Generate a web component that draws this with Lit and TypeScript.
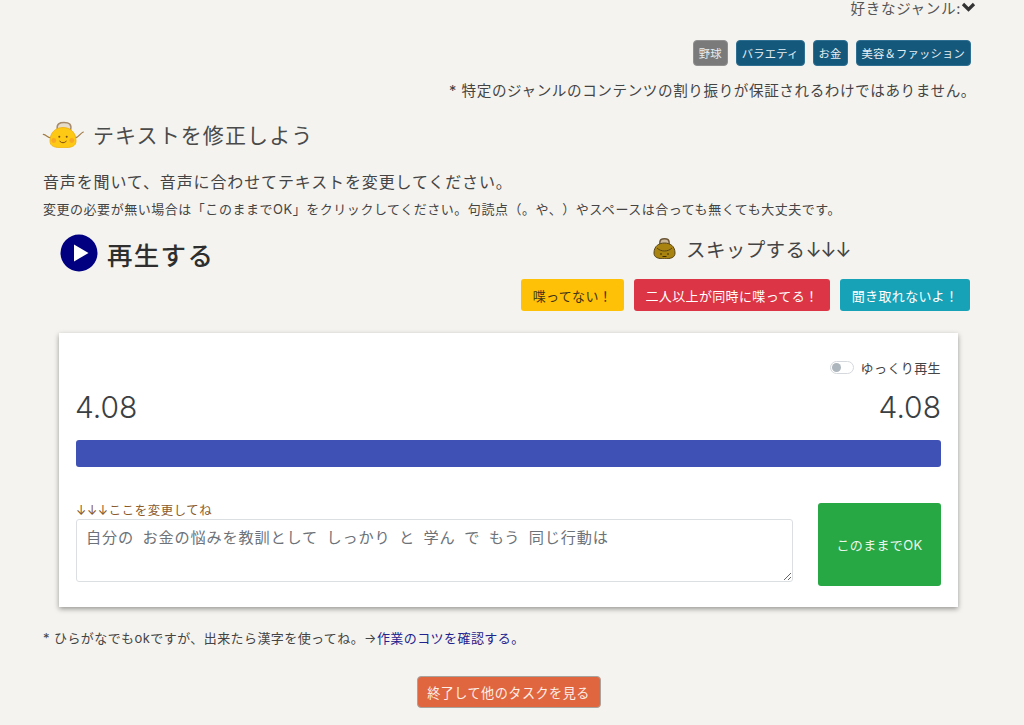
import { LitElement, html, css, svg } from 'lit';
import { customElement } from 'lit/decorators.js';

const happyPurse = svg`
  <path d="M9.5 16.5 C6.5 18 4.5 13.5 1.3 13.3 M32.5 16.5 C36 18 37.5 12.5 41.3 11" fill="none" stroke="#a27c48" stroke-width="1.2" stroke-linecap="round"/>
  <path d="M15.5 9 C14 2.5 18 1.5 22 1.5 C27 1.5 30 3 28.5 9 Z" fill="#e6dccb" stroke="#a58a6c" stroke-width="1.6"/>
  <path d="M8 20 C8 11 14 6.5 21 6.5 C28 6.5 34 11 34 20 C34 25.5 29 26.8 21 26.8 C13 26.8 8 25.5 8 20 Z" fill="#fdc914" stroke="#eeb00c" stroke-width="0.8"/>
  <circle cx="11.8" cy="19.5" r="2.4" fill="#f9a825"/>
  <circle cx="29.8" cy="19.5" r="2.4" fill="#f9a825"/>
  <circle cx="17.3" cy="15.8" r="1" fill="#7a4e12"/>
  <circle cx="24.7" cy="15.8" r="1" fill="#7a4e12"/>
  <path d="M17.5 20 Q21 23.5 24.5 20" fill="none" stroke="#7a4e12" stroke-width="1"/>
`;

const sadPurse = svg`
  <path d="M7 7 C6 1 9 .8 11.5 .8 C14 .8 17 1 16 7 Z" fill="#cbb89a" stroke="#6b5536" stroke-width="1.4"/>
  <path d="M1 15 C1 8 6 5 11.5 5 C17 5 22 8 22 15 C22 19.5 18 20.8 11.5 20.8 C5 20.8 1 19.5 1 15 Z" fill="#a8830f" stroke="#54431a" stroke-width="1"/>
  <path d="M4 10 C8 14 15 14 19 10" fill="none" stroke="#54431a" stroke-width="1"/>
  <circle cx="8" cy="16" r=".8" fill="#2e2408"/>
  <circle cx="15" cy="16" r=".8" fill="#2e2408"/>
  <path d="M9.5 18.5 H13.5" stroke="#2e2408" stroke-width=".9"/>
`;

@customElement('app-root')
export class AppRoot extends LitElement {
  static styles = css`
    :host {
      display: block;
      height: 725px;
      overflow: hidden;
      box-sizing: border-box;
      background: #f4f3ef;
      color: #444;
      font-family: Inter, "Noto Sans CJK JP", sans-serif;
      text-spacing-trim: space-all;
      padding: 0 53px 0 43px;
    }
    .genre-head {
      display: flex;
      justify-content: flex-end;
      align-items: flex-start;
      height: 18px;
      margin-right: -5px;
      font-size: 14.6px;
      letter-spacing: 0.6px;
      line-height: 18px;
      color: #555;
    }
    .genre-head svg { width: 15px; height: 12px; margin-top: 1px; }
    .badges {
      display: flex;
      justify-content: flex-end;
      gap: 8px;
      margin-top: 22px;
    }
    .badge {
      height: 26px;
      box-sizing: border-box;
      padding: 0 5px;
      display: flex;
      align-items: center;
      border-radius: 4px;
      font-size: 11.3px;
      letter-spacing: 0.2px;
      color: #e4eef3;
      background: #14587c;
      border: 1px solid #2f6f92;
    }
    .badge.off { background: #7a7a7a; border-color: #909090; }
    .notice {
      text-align: right;
      font-size: 14.6px;
      letter-spacing: 0.57px;
      line-height: 22px;
      margin: 14px -5px 0 0;
    }
    .title {
      display: flex;
      align-items: center;
      gap: 8px;
      margin: 16px 0 0 -1px;
      height: 32px;
      font-size: 21px;
      letter-spacing: 1.1px;
      font-weight: 400;
      color: #4a4a4a;
    }
    .title svg { width: 43px; height: 27px; }
    .lead {
      font-size: 16px;
      letter-spacing: 0.87px;
      line-height: 24px;
      margin-top: 20px;
    }
    .sub {
      font-size: 13px;
      letter-spacing: 0.53px;
      line-height: 18px;
      margin-top: 6px;
    }
    .actions {
      display: flex;
      justify-content: space-between;
      margin-top: 6px;
      padding-left: 17px;
    }
    .play {
      display: flex;
      align-items: center;
      gap: 9px;
      height: 38px;
      margin-top: 10px;
      font-size: 25.5px;
      letter-spacing: 1.3px;
      font-weight: 500;
      color: #2e2e2e;
    }
    .play svg { width: 38px; height: 38px; }
    .skip-col { display: flex; flex-direction: column; align-items: flex-end; }
    .skip {
      display: flex;
      align-items: center;
      gap: 10px;
      height: 30px;
      margin: 9px 119px 0 0;
      font-size: 19.5px;
      letter-spacing: 0.4px;
      color: #444;
    }
    .skip svg { width: 23px; height: 21px; }
    .skip .arrows { letter-spacing: -1.4px; margin-right: 2px; }
    .reasons { display: flex; gap: 10px; margin: 16px 1px 0 0; }
    .btn {
      border: none;
      height: 32px;
      padding: 0 11.7px;
      border-radius: 3px;
      font: inherit;
      font-size: 13px;
      letter-spacing: 0.35px;
      color: #fff;
    }
    .btn.yellow { background: #ffc107; color: #3f3517; }
    .btn.red { background: #dc3545; }
    .btn.teal { background: #17a2b8; }
    .card {
      background: #fff;
      margin: 22px 13px 0 16px;
      height: 274px;
      box-sizing: border-box;
      padding: 25px 17px 21px;
      box-shadow: 0 2px 5px rgba(0, 0, 0, 0.38);
    }
    .slow {
      display: flex;
      justify-content: flex-end;
      align-items: center;
      gap: 7px;
      height: 18px;
      font-size: 13px;
      letter-spacing: 0.4px;
      color: #444;
    }
    .switch {
      width: 24px;
      height: 13px;
      box-sizing: border-box;
      border: 1px solid #d5d8dc;
      border-radius: 7px;
      background: #fff;
      padding: 1px;
    }
    .switch i { display: block; width: 9px; height: 9px; border-radius: 50%; background: #adb5bd; }
    .times {
      display: flex;
      justify-content: space-between;
      font-size: 30px;
      font-weight: 300;
      line-height: 40px;
      margin: 11px 0 0 -1px;
      color: #3a3f44;
    }
    .bar { height: 27px; margin-top: 13px; border-radius: 3px; background: #3f51b5; }
    .edit { display: flex; gap: 25px; margin-top: 36px; }
    .field { flex: 1; display: flex; flex-direction: column; }
    .field label { font-size: 12.4px; letter-spacing: 0.6px; line-height: 15px; margin-bottom: 1px; color: #8a5a2c; }
    textarea {
      height: 63px;
      box-sizing: border-box;
      border: 1px solid #dcdfe2;
      border-radius: 3px;
      padding: 6px 9px;
      font: inherit;
      font-size: 15.2px;
      letter-spacing: 0.8px;
      word-spacing: 3.5px;
      line-height: 24px;
      color: #6c7278;
    }
    .ok {
      width: 123px;
      height: 83px;
      border: none;
      border-radius: 3px;
      background: #28a745;
      color: #e9f6ec;
      font: inherit;
      font-size: 13px;
      letter-spacing: 0.35px;
    }
    .hint { font-size: 13px; letter-spacing: 0.42px; line-height: 20px; margin-top: 21px; color: #444; }
    .hint a { color: #23238e; text-decoration: none; }
    .finish-row { display: flex; justify-content: center; padding-left: 3px; margin-top: 28px; }
    .finish {
      width: 184px;
      height: 32px;
      border: 1px solid #a9a39d;
      border-radius: 4px;
      background: #e0663f;
      color: #fdeee8;
      font: inherit;
      font-size: 13.1px;
      letter-spacing: 0.5px;
    }
  `;

  render() {
    return html`
      <div class="genre-head">
        好きなジャンル:
        <svg viewBox="0 0 15 12"><path d="M2 3 L7.5 8.5 L13 3" fill="none" stroke="#333" stroke-width="3.2"/></svg>
      </div>
      <div class="badges">
        <span class="badge off">野球</span>
        <span class="badge">バラエティ</span>
        <span class="badge">お金</span>
        <span class="badge">美容＆ファッション</span>
      </div>
      <div class="notice">* 特定のジャンルのコンテンツの割り振りが保証されるわけではありません。</div>

      <h2 class="title">
        <svg viewBox="0 0 43 27">${happyPurse}</svg>
        テキストを修正しよう
      </h2>
      <div class="lead">音声を聞いて、音声に合わせてテキストを変更してください。</div>
      <div class="sub">変更の必要が無い場合は「このままでOK」をクリックしてください。句読点（。や、）やスペースは合っても無くても大丈夫です。</div>

      <div class="actions">
        <div class="play">
          <svg viewBox="0 0 38 38">
            <circle cx="19" cy="19" r="18.5" fill="#000080"/>
            <path d="M14 10.5 L28.5 19 L14 27.5 Z" fill="#fff"/>
          </svg>
          再生する
        </div>
        <div class="skip-col">
          <div class="skip">
            <svg viewBox="0 0 23 21">${sadPurse}</svg>
            <span>スキップする<span class="arrows">↓↓↓</span></span>
          </div>
          <div class="reasons">
            <button class="btn yellow">喋ってない！</button>
            <button class="btn red">二人以上が同時に喋ってる！</button>
            <button class="btn teal">聞き取れないよ！</button>
          </div>
        </div>
      </div>

      <div class="card">
        <div class="slow"><span class="switch"><i></i></span>ゆっくり再生</div>
        <div class="times"><span>4.08</span><span>4.08</span></div>
        <div class="bar"></div>
        <div class="edit">
          <div class="field">
            <label>↓↓↓ここを変更してね</label>
            <textarea .value=${'自分の お金の悩みを教訓として しっかり と 学ん で もう 同じ行動は'}></textarea>
          </div>
          <button class="ok">このままでOK</button>
        </div>
      </div>

      <div class="hint">* ひらがなでもokですが、出来たら漢字を使ってね。→<a href="#">作業のコツを確認する。</a></div>
      <div class="finish-row"><button class="finish">終了して他のタスクを見る</button></div>
    `;
  }
}
